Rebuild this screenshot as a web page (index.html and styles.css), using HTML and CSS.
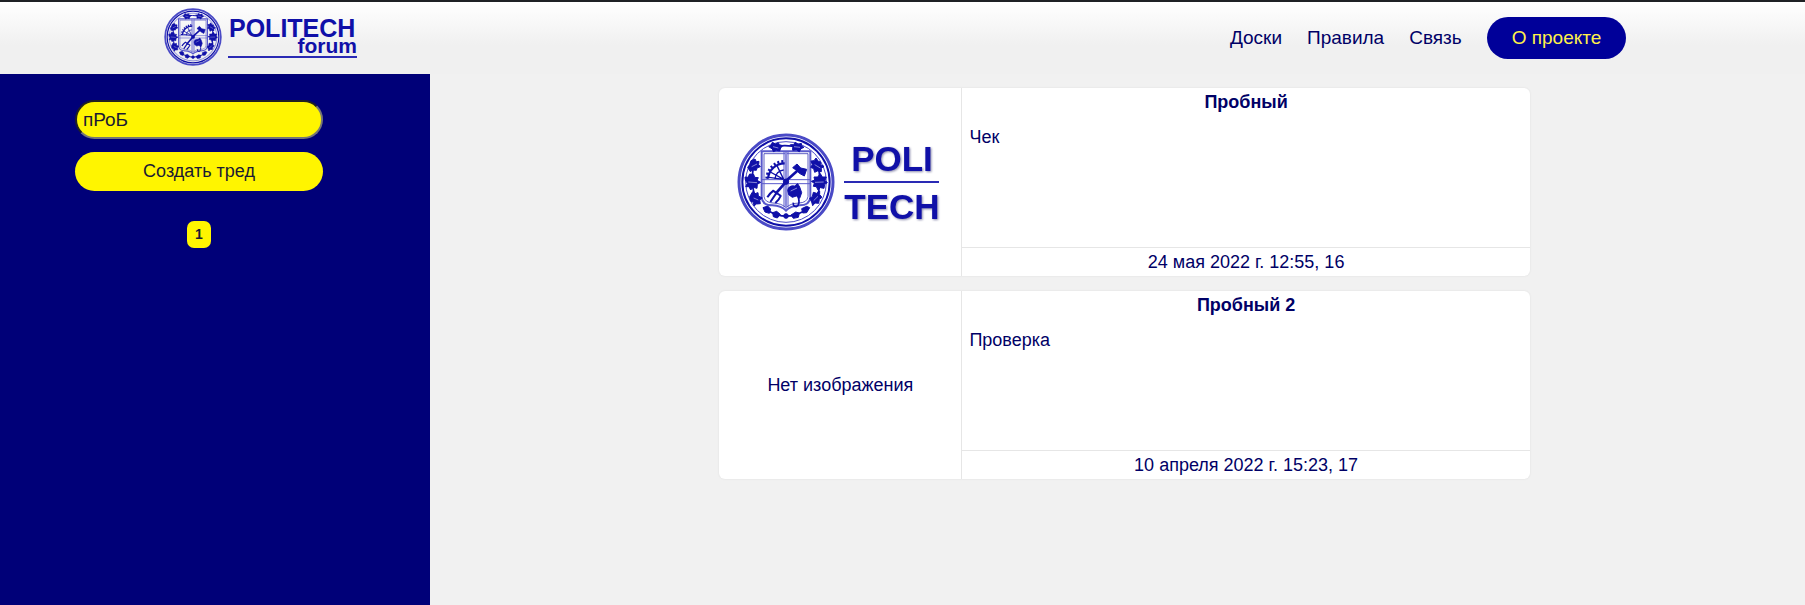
FILE: index.html
```html
<!DOCTYPE html>
<html lang="ru">
<head>
<meta charset="utf-8">
<title>Politech forum</title>
<link rel="stylesheet" href="styles.css">
</head>
<body>
<svg class="defs" aria-hidden="true">
  <symbol id="emblem" viewBox="50 39 294 294">
    <g fill="none" stroke="#1010a8">
      <circle cx="197" cy="186" r="141" stroke-width="9" stroke="#4a4ac6"/>
      <circle cx="197" cy="186" r="131" stroke-width="6"/>
      <circle cx="197" cy="186" r="121" stroke-width="3" stroke="#4a4ac6"/>
      <path d="M124 94H270V232Q268 256 238 256Q210 258 197 272Q184 258 156 256Q126 256 124 232Z" stroke-width="6" stroke="#5959cc"/>
      <path d="M131 101H263V230Q260 248 236 249Q210 250 197 263Q184 250 158 249Q134 248 131 230Z" stroke-width="2"/>
      <path d="M191 96V262M203 96V262M124 179H270M124 191H270" stroke-width="3" stroke="#5959cc"/>
      <path d="M197 96V266" stroke-width="6" stroke="#8d8ddd"/>
      <path d="M143 176A50 50 0 0 1 193 130" stroke-width="7"/>
      <path d="M139 176A54 54 0 0 1 193 124" stroke-width="8" stroke-dasharray="6 6"/>
      <path d="M164 177A28 28 0 0 1 190 150M190 178L150 156M190 178L170 137M190 178L146 172" stroke-width="4"/>
      <path d="M200 180L238 146" stroke-width="8"/>
      <path d="M193 190L166 221" stroke-width="8"/>
      <path d="M160 211Q148 220 141 232M182 226Q176 240 165 249M169 218L150 246M158 212L182 228" stroke-width="6"/>
      <path d="M232 226Q242 254 228 260Q218 260 219 248" stroke-width="5"/>
      <path d="M146 274Q197 303 250 274M154 84Q190 70 240 84" stroke-width="5"/>
      <path d="M104 125Q84 185 111 248M288 125Q312 185 283 248" stroke-width="5"/>
    </g>
    <g fill="#1010a8" stroke="#1010a8" stroke-width="3" stroke-linejoin="round">
      <circle cx="197" cy="185" r="8"/>
      <path d="M217 143L230 132L241 144L259 148L252 168L237 160L231 153Z"/>
      <path d="M202 211Q205 195 223 198L232 191L238 201L244 218L238 235L228 228L216 232L205 224Z"/>
      <path d="M82 142L88 134L92 122L104 117L108 125L116 124L115 134L120 140L110 144L108 151L97 150L90 155Z"/>
      <path d="M75 180L74 171L83 172L88 162L100 163L103 172L114 173L110 181L121 187L111 193L110 205L99 202L91 210L86 200L76 200L81 190Z"/>
      <path d="M88 230L97 215L104 221L113 218L114 228L126 234L118 240L120 251L108 252L101 258L99 247L90 243Z"/>
      <path d="M272 123L281 122L287 114L294 124L301 126L301 134L311 139L303 145L303 155L291 153L283 157L280 146L271 142L276 134Z"/>
      <path d="M273 184L283 180L281 171L292 171L300 161L306 171L318 171L314 181L321 188L313 193L311 205L300 203L293 210L288 200L279 199L282 190Z"/>
      <path d="M268 235L276 230L279 217L289 220L298 213L298 224L305 232L297 238L295 250L284 249L277 257L274 246Z"/>
      <path d="M145 80L152 76L156 67L166 72L174 68L177 74L187 77L181 84L178 93L168 91L159 95L156 87Z"/>
      <path d="M210 74L219 74L225 67L233 73L243 70L244 77L251 82L242 86L237 95L228 90L217 91L217 82Z"/>
      <path d="M128 263L142 258L151 267L147 280L134 276Z"/>
      <path d="M157 278L169 274L180 283L171 294L159 290Z"/>
      <circle cx="197" cy="288" r="7"/>
      <path d="M212 285L226 276L237 279L234 292L219 295Z"/>
      <path d="M244 266L259 259L268 263L259 278L247 279Z"/>
    </g>
    <g fill="none" stroke="#c0c0ee" stroke-width="2">
      <path d="M84 186L110 188M94 140L110 132M100 234L114 240M284 187L310 186M283 134L300 144M280 242L293 229M158 80L174 84M221 80L239 82M211 213L230 204"/>
    </g>
  </symbol>
</svg>

<header class="header">
  <a class="logo" href="#" aria-label="Politech forum">
    <svg class="logo__img" viewBox="0 0 196 60">
      <use href="#emblem" x="1" y="0" width="58" height="58"/>
      <text class="brand brand--wide" x="66" y="29">POLITECH</text>
      <text class="brand brand--sub" x="194" y="45">forum</text>
      <path class="brand-line" d="M65 49H194"/>
    </svg>
  </a>
  <nav class="nav">
    <a class="nav__link" href="#">Доски</a>
    <a class="nav__link" href="#">Правила</a>
    <a class="nav__link" href="#">Связь</a>
    <a class="nav__link nav__link--pill" href="#">О проекте</a>
  </nav>
</header>

<div class="layout">
  <aside class="sidebar">
    <form class="tools">
      <input class="search" type="text" value="пРоБ" aria-label="Поиск">
      <button class="create" type="button">Создать тред</button>
    </form>
    <nav class="pager" aria-label="Страницы"><a class="pager__page" href="#">1</a></nav>
  </aside>

  <main class="threads">
    <article class="card">
      <div class="card__image">
        <svg class="card__logo" viewBox="0 0 206 98" role="img" aria-label="Politech">
          <use href="#emblem" x="0" y="0" width="98" height="98"/>
          <g class="shadowed">
            <text class="brand brand--card" x="155" y="38">POLI</text>
            <text class="brand brand--card" x="155" y="86">TECH</text>
          </g>
          <path class="brand-line" d="M107 49H202"/>
        </svg>
      </div>
      <div class="card__content">
        <h2 class="card__title">Пробный</h2>
        <p class="card__text">Чек</p>
        <footer class="card__meta">24 мая 2022 г. 12:55, 16</footer>
      </div>
    </article>
    <article class="card">
      <div class="card__image">Нет изображения</div>
      <div class="card__content">
        <h2 class="card__title">Пробный 2</h2>
        <p class="card__text">Проверка</p>
        <footer class="card__meta">10 апреля 2022 г. 15:23, 17</footer>
      </div>
    </article>
  </main>
</div>
</body>
</html>
```
FILE: styles.css
```css
* { box-sizing: border-box; }

body {
  margin: 0;
  min-height: 100vh;
  display: flex;
  flex-direction: column;
  background: #f1f1f1;
  color: #000066;
  font: 18px/28px "Liberation Sans", Arial, sans-serif;
}

a { color: inherit; text-decoration: none; }

.defs { position: absolute; width: 0; height: 0; }

.header {
  display: flex;
  align-items: center;
  justify-content: space-between;
  height: 74px;
  padding: 0 9.9% 0 9.05%;
  border-top: 2px solid #1f2125;
  background: linear-gradient(#ffffff, #f0f0f0 60%);
}

.logo { display: flex; }
.logo__img { width: 196px; height: 60px; }

.brand {
  fill: #1010a8;
  font-family: "Liberation Sans", Arial, sans-serif;
  font-weight: bold;
}
.brand--wide { font-size: 25px; }
.brand--sub { font-size: 21px; text-anchor: end; }
.brand--card { font-size: 35px; text-anchor: middle; }
.brand-line { stroke: #2a2ab4; stroke-width: 2; }
.shadowed { filter: drop-shadow(1px 1px 1px #8888aa); }

.nav { display: flex; align-items: center; gap: 25px; }
.nav__link { font-size: 19px; }
.nav__link--pill {
  padding: 7px 25px;
  border-radius: 21px;
  background: #000099;
  color: #fff04a;
}

.layout { display: flex; flex: 1; }

.sidebar {
  width: 23.8%;
  padding: 26px 5.9% 0 4.15%;
  background: #000078;
}

.tools { display: grid; gap: 13px; }
.search, .create {
  width: 100%;
  height: 39px;
  border-radius: 20px;
  background: #fff500;
  color: #1a1a33;
  font: 18px "Liberation Sans", Arial, sans-serif;
}
.search { padding: 0 6px; border: 2px inset #767676; font-size: 19px; }
.create { padding: 0; border: 0; }

.pager { display: flex; justify-content: center; margin-top: 30px; }
.pager__page {
  padding: 0 8px;
  border-radius: 7px;
  background: #fff500;
  color: #1a1a33;
  font-size: 14px;
  font-weight: bold;
  line-height: 27px;
}

.threads {
  flex: 1;
  display: flex;
  flex-direction: column;
  gap: 15px;
  padding: 14px 15.25% 40px 16.05%;
}

.card {
  display: grid;
  grid-template-columns: 30% 1fr;
  min-height: 188px;
  border-radius: 6px;
  background: #ffffff;
  box-shadow: 0 0 2px #dddddd;
}
.card__image {
  display: flex;
  align-items: center;
  justify-content: center;
  border-right: 1px solid #e6e6e6;
}
.card__logo { width: 206px; height: 98px; }
.card__content { display: flex; flex-direction: column; }
.card__title { margin: 0; font-size: 18px; text-align: center; }
.card__text { flex: 1; margin: 0; padding: 7px; }
.card__meta { border-top: 1px solid #e6e6e6; text-align: center; }
```
